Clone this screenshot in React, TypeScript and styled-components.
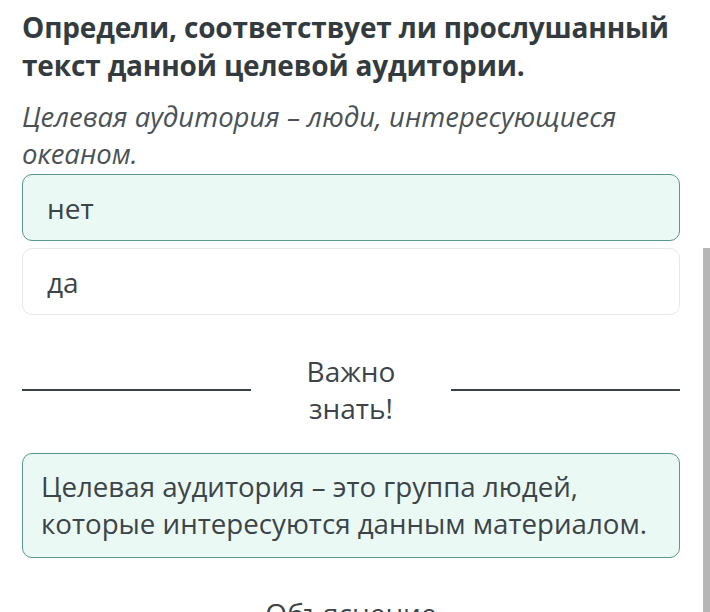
import React from "react";
import styled, { createGlobalStyle } from "styled-components";

const Global = createGlobalStyle`
  html, body { margin: 0; padding: 0; background: #ffffff; overflow: hidden; }
  body { font-family: "Open Sans", "Noto Sans", sans-serif; color: #3c4448; }
`;

const Page = styled.div`
  position: relative;
  width: 710px;
  height: 612px;
  overflow: hidden;
  background: #fff;
`;

const Content = styled.div`
  width: 658px;
  padding: 8px 0 0 22px;
  display: flex;
  flex-direction: column;
`;

const Title = styled.h1`
  margin: 0;
  font-size: 28px;
  line-height: 38px;
  font-weight: 700;
  letter-spacing: -0.15px;
  color: #343b3f;
`;

const Subtitle = styled.p`
  margin: 14px 0 0;
  font-size: 27.5px;
  line-height: 37px;
  font-style: italic;
  color: #4a5256;
`;

const Options = styled.div`
  display: flex;
  flex-direction: column;
  gap: 7px;
  margin-top: 2px;
`;

const Option = styled.div<{ $selected?: boolean }>`
  box-sizing: border-box;
  height: 67px;
  display: flex;
  align-items: center;
  padding: 0 24px;
  border-radius: 10px;
  font-size: 28px;
  color: #3c4448;
  background: ${(p) => (p.$selected ? "#ebf9f4" : "#ffffff")};
  border: 1px solid ${(p) => (p.$selected ? "#5b968f" : "#e6e8e8")};
`;

const Divider = styled.div`
  display: grid;
  grid-template-columns: 1fr 200px 1fr;
  align-items: center;
  margin-top: 38px;
`;

const Rule = styled.div`
  height: 2px;
  background: #3a4245;
`;

const DividerText = styled.div`
  text-align: center;
  font-size: 28px;
  line-height: 37px;
  color: #3c4448;
`;

const Info = styled.div`
  box-sizing: border-box;
  margin-top: 26px;
  padding: 14px 18px 15px;
  border-radius: 10px;
  border: 1px solid #5b968f;
  background: #ebf9f4;
  font-size: 27.7px;
  line-height: 37px;
  color: #3c4448;
`;

const Explain = styled.div`
  margin-top: 37px;
  text-align: center;
  font-size: 28px;
  line-height: 37px;
  color: #3c4448;
`;

const Scrollbar = styled.div`
  position: absolute;
  right: 0;
  top: 248px;
  width: 7px;
  bottom: 0;
  background: #b6b6b6;
`;

export default function App() {
  return (
    <>
      <Global />
      <Page>
        <Content>
          <Title>
            Определи, соответствует ли прослушанный текст данной целевой аудитории.
          </Title>
          <Subtitle>Целевая аудитория – люди, интересующиеся океаном.</Subtitle>
          <Options>
            <Option $selected>нет</Option>
            <Option>да</Option>
          </Options>
          <Divider>
            <Rule />
            <DividerText>
              Важно
              <br />
              знать!
            </DividerText>
            <Rule />
          </Divider>
          <Info>
            Целевая аудитория – это группа людей,
            <br />
            которые интересуются данным материалом.
          </Info>
          <Explain>Объяснение</Explain>
        </Content>
        <Scrollbar />
      </Page>
    </>
  );
}
